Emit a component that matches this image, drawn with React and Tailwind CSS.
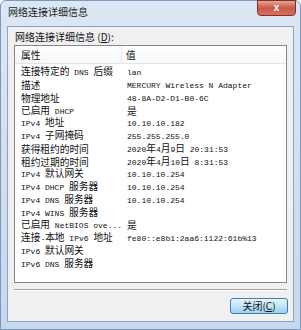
import React from "react";

const rows = [
  ["连接特定的 DNS 后缀", "lan"],
  ["描述", "MERCURY Wireless N Adapter"],
  ["物理地址", "48-8A-D2-D1-B0-6C"],
  ["已启用 DHCP", "是"],
  ["IPv4 地址", "10.10.10.182"],
  ["IPv4 子网掩码", "255.255.255.0"],
  ["获得租约的时间", "2020年4月9日 20:31:53"],
  ["租约过期的时间", "2020年4月10日 8:31:53"],
  ["IPv4 默认网关", "10.10.10.254"],
  ["IPv4 DHCP 服务器", "10.10.10.254"],
  ["IPv4 DNS 服务器", "10.10.10.254"],
  ["IPv4 WINS 服务器", ""],
  ["已启用 NetBIOS ove...", "是"],
  ["连接-本地 IPv6 地址", "fe80::e8b1:2aa6:1122:61b%13"],
  ["IPv6 默认网关", ""],
  ["IPv6 DNS 服务器", ""],
];

// SimSun-like look: CJK runs wide, ascii runs half width
function Mixed({ text }) {
  const parts = text.split(/([\u3000-\u9fff\uff00-\uffef]+)/);
  return (
    <>
      {parts.map((p, i) =>
        p === "" ? null : /[\u3000-\u9fff\uff00-\uffef]/.test(p) ? (
          <span key={i} className="font-['Noto_Sans_CJK_SC',sans-serif] text-[9.7px] leading-[12px]">
            {p}
          </span>
        ) : (
          <span key={i} className="font-['Liberation_Mono',monospace] text-[8px] leading-[12px] whitespace-pre">
            {p}
          </span>
        )
      )}
    </>
  );
}

export default function App() {
  return (
    <div className="w-[301px] h-[330px] bg-gradient-to-b from-[#dbe7f4] to-[#c6d8ee] border border-[#7d98bd] rounded-t-[6px] flex flex-col px-[6px] pb-[7px]">
      <div className="h-[25px] flex items-start justify-between">
        <div className="pt-[4px] pl-[1px] text-[10px] leading-[14px] text-[#1e1e1e] font-['Noto_Sans_CJK_SC',sans-serif]">
          网络连接详细信息
        </div>
        <div className="w-[39px] h-[16px] -mt-[1px] -mr-[2px] rounded-b-[4px] border border-[#7e2f27] bg-gradient-to-b from-[#e7a394] via-[#c9584a] to-[#d5715c] flex items-center justify-center">
          <span className="text-white text-[10px] font-bold leading-none font-['Liberation_Sans',sans-serif]">x</span>
        </div>
      </div>

      <div className="flex-1 bg-[#f0f0f0] border border-[#8ca3c2] flex flex-col px-[6px]">
        <div className="pt-[3px] pl-[1px] h-[18px] text-[10px] leading-[14px] text-[#111] font-['Noto_Sans_CJK_SC',sans-serif]">
          网络连接详细信息 (<span className="underline">D</span>):
        </div>

        <div className="h-[238px] bg-white border border-[#828790] flex flex-col overflow-hidden">
          <div className="h-[18px] flex items-center border-b border-[#e3e4e6] bg-gradient-to-b from-white to-[#f6f7f9] text-[#111] text-[10px] leading-[12px]">
            <div className="w-[107px] pl-[6px] border-r border-[#e6e8eb] h-full flex items-center">
              <Mixed text="属性" />
            </div>
            <div className="pl-[4px]">
              <Mixed text="值" />
            </div>
          </div>
          <div className="pt-[2px] text-[#111]">
            {rows.map(([k, v]) => (
              <div key={k} className="h-[12.75px] flex items-center text-[10px] leading-[12px]">
                <div className="w-[112px] pl-[6px] whitespace-nowrap">
                  <Mixed text={k} />
                </div>
                <div className="whitespace-nowrap">
                  <Mixed text={v} />
                </div>
              </div>
            ))}
          </div>
        </div>

        <div className="mt-[6px] border-t border-[#a0a0a0] border-b border-b-white" />

        <div className="flex justify-end pt-[7px]">
          <button
            type="button"
            className="w-[58px] h-[16px] -mr-[1px] rounded-[3px] border border-[#3c7fb1] bg-gradient-to-b from-[#e5f4fc] via-[#c4e5f6] to-[#98d1ef] text-[10px] leading-none text-[#111] font-['Noto_Sans_CJK_SC',sans-serif] flex items-center justify-center"
          >
            关闭(<span className="underline">C</span>)
          </button>
        </div>
      </div>
    </div>
  );
}
